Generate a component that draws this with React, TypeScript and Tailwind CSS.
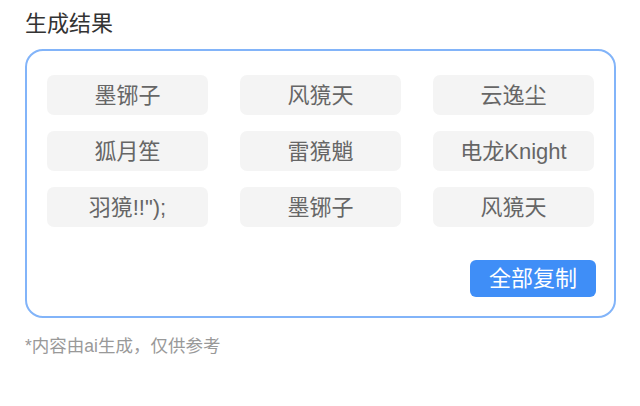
import React from 'react';

const names = ['墨铘子', '风獍天', '云逸尘', '狐月笙', '雷獍魈', '电龙Knight', '羽獍!!");', '墨铘子', '风獍天'];

const font = { fontFamily: '"Liberation Sans", "Noto Sans CJK SC", sans-serif' };

export default function App() {
  return (
    <div className="w-[640px] h-[406px] bg-white pl-[25px] pt-[10px]" style={font}>
      <h2 className="text-[22px] leading-[28px] text-[#333333] mb-[11px]">生成结果</h2>

      {/* result card */}
      <div className="w-[591px] border-2 border-[#82b4f9] rounded-[18px] px-[20px] pt-[24px] pb-[19px] flex flex-col">
        <div className="grid grid-cols-3 gap-x-[32px] gap-y-[16px]">
          {names.map((n, i) => (
            <div
              key={i}
              className="h-[40px] rounded-[7px] bg-[#f4f4f4] flex items-center justify-center text-[22px] text-[#666666]"
            >
              {n}
            </div>
          ))}
        </div>
        <div className="flex justify-end mt-[33px] -mr-[2px]">
          <button className="w-[126px] h-[37px] rounded-[6px] bg-[#3f8ef7] text-white text-[22px] flex items-center justify-center">
            全部复制
          </button>
        </div>
      </div>

      <p className="mt-[17px] text-[17.5px] leading-[22px] text-[#999999]">*内容由ai生成，仅供参考</p>
    </div>
  );
}
